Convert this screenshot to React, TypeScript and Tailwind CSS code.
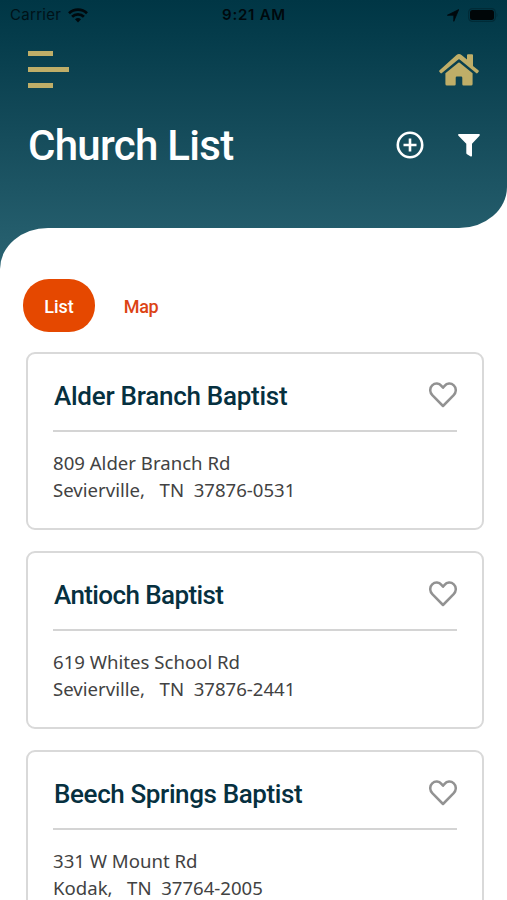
import React, { useState } from 'react';

interface Church {
  name: string;
  street: string;
  city: string;
  state: string;
  zip: string;
  titleClass: string;
}

const CHURCHES: Church[] = [
  { name: 'Alder Branch Baptist', street: '809 Alder Branch Rd', city: 'Sevierville', state: 'TN', zip: '37876-0531', titleClass: 'tracking-[-0.26px]' },
  { name: 'Antioch Baptist', street: '619 Whites School Rd', city: 'Sevierville', state: 'TN', zip: '37876-2441', titleClass: 'tracking-[-0.6px]' },
  { name: 'Beech Springs Baptist', street: '331 W Mount Rd', city: 'Kodak', state: 'TN', zip: '37764-2005', titleClass: 'tracking-[-0.38px]' },
];

const StatusBar = () => (
  <div className="grid h-[30px] grid-cols-3 items-center pl-[10px] pr-[9px] font-['Inter',sans-serif] text-[15px] text-[#00090d]">
    <div className="flex items-center gap-[7px]">
      <span className="tracking-[0.3px] opacity-80">Carrier</span>
      <svg width="20" height="15" viewBox="0 0 20 15" fill="none" stroke="currentColor" strokeWidth="2.7">
        <path d="M1 5.2a13 13 0 0 1 18 0" />
        <path d="M4.1 8.7a8.4 8.4 0 0 1 11.8 0" />
        <path d="M10 14.4l-3-3.1a4.4 4.4 0 0 1 6 0z" fill="currentColor" stroke="none" />
      </svg>
    </div>
    <span className="whitespace-nowrap text-center font-semibold tracking-[0.75px]">9:21 AM</span>
    <div className="flex items-center justify-end gap-[9px]">
      <svg width="12" height="13" viewBox="0 0 12 13" fill="currentColor">
        <path d="M11.7.6L6.8 12.3V6.2H.4z" stroke="currentColor" strokeWidth=".8" strokeLinejoin="round" />
      </svg>
      <svg width="30" height="14" viewBox="0 0 30 14">
        <rect x=".6" y=".6" width="26.8" height="12.8" rx="4" fill="none" stroke="#002b37" strokeWidth="1.2" />
        <rect x="2" y="2" width="24" height="10" rx="2.5" fill="#000608" />
        <path d="M28.6 5v4c1.1-.8 1.1-3.2 0-4z" fill="#002b37" />
      </svg>
    </div>
  </div>
);

const MenuIcon = () => (
  <svg width="42" height="38" viewBox="0 0 42 38" fill="#bfae68">
    <rect x="0" y="0" width="25" height="5" />
    <rect x="0" y="16" width="41" height="5" />
    <rect x="0" y="32" width="25" height="5" />
  </svg>
);

const HomeIcon = () => (
  <svg width="40" height="32" viewBox="0 0 40 32" fill="#bfae68">
    <path d="M28 1.2q0-1 1-1h4q1 0 1 1V12l5.4 4.3q.8.7.2 1.5l-1 1.2q-.7.7-1.5.1L20.7 5.5q-.7-.5-1.4 0L2.9 19.1q-.8.6-1.5-.1l-1-1.2q-.6-.8.2-1.5L17.5 1.1q2.5-2 5 0L28 5.6z" />
    <path d="M6.4 19.2L19.3 8.7q.7-.5 1.4 0l12.9 10.5V30q0 1.500-1.500 1.500h-7.600q-1.200 0-1.200-1.200v-6.600q0-1.200-1.200-1.200h-4.200q-1.200 0-1.200 1.200v6.600q0 1.200-1.200 1.200H7.900q-1.500 0-1.500-1.500z" />
  </svg>
);

const AddIcon = () => (
  <svg width="28" height="28" viewBox="0 0 28 28" fill="none" stroke="#fff" strokeWidth="2.6">
    <circle cx="14" cy="14" r="12.2" />
    <path d="M14 7.5v13M7.5 14h13" />
  </svg>
);

const FilterIcon = () => (
  <svg width="22" height="23" viewBox="0 0 22 23" fill="#fff">
    <path d="M1 0h20q1 0 .8 1-.1.5-.5.9L14 9.800V21.500q0 1.600-1.300.9L9 20.200q-.7-.4-.7-1.200V9.800L.7 1.900Q.2 1.400.1 1 0 0 1 0z" />
  </svg>
);

const HeartIcon = () => (
  <svg width="28" height="26" viewBox="0 0 28 26" fill="none" stroke="#929292" strokeWidth="2.5" strokeLinejoin="round">
    <path d="M14 24L3.300 13.200C.5 10.300.6 5.900 3.200 3.400c2.900-2.700 6.900-2.300 9.200.5L14 5.700l1.600-1.800c2.300-2.800 6.300-3.200 9.200-.5 2.600 2.500 2.700 6.900-.1 9.800z" />
  </svg>
);

const ChurchCard = ({ church }: { church: Church }) => (
  <article className="h-[178px] rounded-[9px] border-2 border-[#d9d9d9] px-[25px]">
    <div className="flex h-[78px] items-center justify-between border-b-2 border-[#d4d4d4] pt-2">
      <h2 className={`whitespace-nowrap pl-px font-['Roboto',sans-serif] text-[26px] font-medium text-[#06303f] ${church.titleClass}`}>
        {church.name}
      </h2>
      <button aria-label="Favorite" className="pb-0.5">
        <HeartIcon />
      </button>
    </div>
    <address className="whitespace-pre pt-[18px] font-['Noto_Sans',sans-serif] text-[18.6px] not-italic leading-[26.5px] text-[#424242]">
      <p>{church.street}</p>
      <p>{`${church.city},   ${church.state}  ${church.zip}`}</p>
    </address>
  </article>
);

export default function App() {
  const [view, setView] = useState<'list' | 'map'>('list');

  const tabClass = (active: boolean) =>
    active ? 'bg-[#e54800] text-white' : 'text-[#dc4314]';

  return (
    <div className="h-[900px] w-full overflow-hidden bg-white">
      <header className="h-[228px] rounded-br-[48px_41px] bg-linear-to-b from-[#003645] to-[#235c6b]">
        <StatusBar />
        <div className="flex h-[80px] items-center justify-between px-7">
          <button aria-label="Menu">
            <MenuIcon />
          </button>
          <button aria-label="Home">
            <HomeIcon />
          </button>
        </div>
        <div className="flex h-[70px] items-center justify-between pl-7 pr-[27px]">
          <h1 className="whitespace-nowrap font-['Roboto',sans-serif] text-[42px] font-medium tracking-[-0.7px] text-white">
            Church List
          </h1>
          <div className="flex items-center gap-[34px]">
            <button aria-label="Add church">
              <AddIcon />
            </button>
            <button aria-label="Filter">
              <FilterIcon />
            </button>
          </div>
        </div>
      </header>

      <div className="bg-linear-to-b from-[#235c6b] to-[#2b6473] to-[48px]">
        <main className="h-[672px] rounded-tl-[48px_41px] bg-white pt-[51px]">
          <nav className="flex items-center pl-[23px] font-['Roboto',sans-serif] text-[18px] font-medium">
            <button
              onClick={() => setView('list')}
              className={`h-[53px] w-[72px] rounded-[26px] pt-px ${tabClass(view === 'list')}`}
            >
              List
            </button>
            <button
              onClick={() => setView('map')}
              className={`ml-[10px] h-[53px] w-[72px] rounded-[26px] pt-px tracking-[-0.4px] ${tabClass(view === 'map')}`}
            >
              Map
            </button>
          </nav>
          <section className="flex flex-col gap-[21px] pl-[26px] pr-[23px] pt-5">
            {CHURCHES.map((church) => (
              <ChurchCard key={church.name} church={church} />
            ))}
          </section>
        </main>
      </div>
    </div>
  );
}
